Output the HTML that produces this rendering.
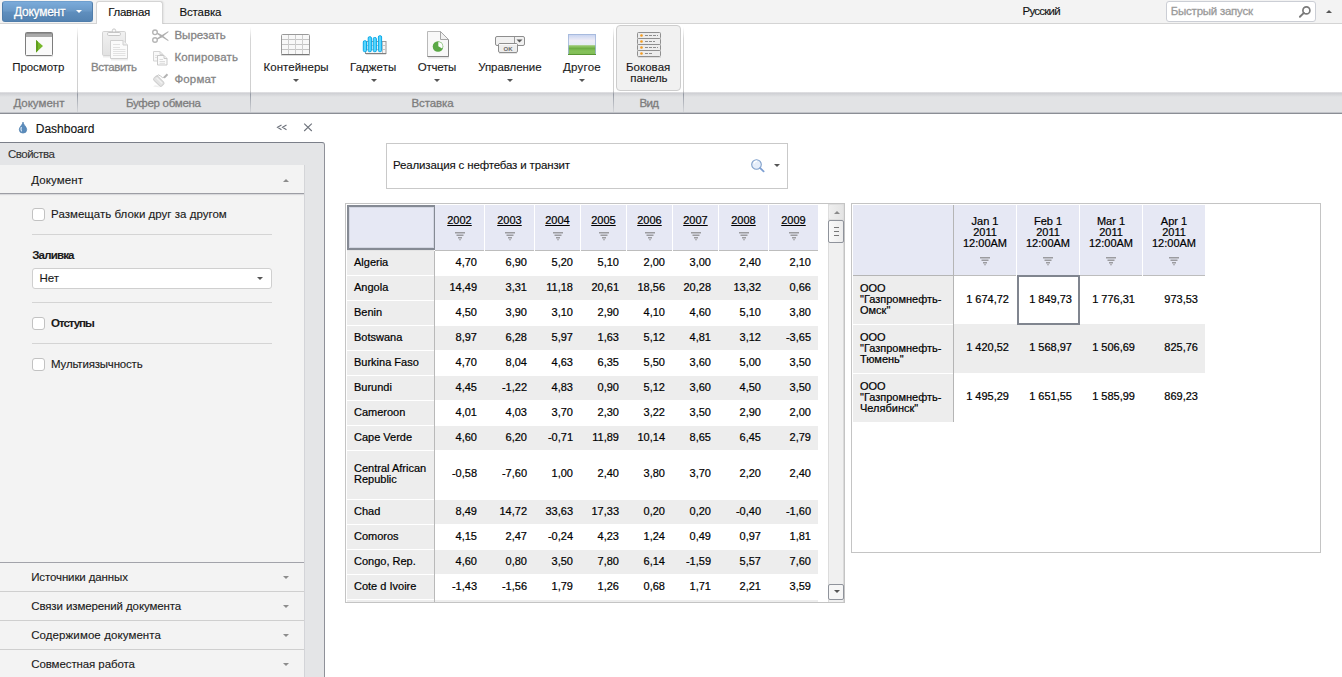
<!DOCTYPE html>
<html><head><meta charset="utf-8"><title>Dashboard</title>
<style>
*{box-sizing:border-box;margin:0;padding:0}
html,body{width:1342px;height:677px;overflow:hidden;background:#fff;font-family:"Liberation Sans",sans-serif;font-size:12px;color:#1a1a1a}
.abs{position:absolute;white-space:nowrap}
#tabbar{position:absolute;left:0;top:0;width:1342px;height:24px;background:#f3f3f3;border-bottom:1px solid #d4d4d4}
#docbtn{position:absolute;left:2px;top:1px;width:91px;height:21px;border-radius:3px;background:linear-gradient(#7babda,#6b9ac8 45%,#5f8ebd 55%,#5483b2);border:1px solid #4f7dab;border-top-color:#6f9fce}
#tab1{position:absolute;left:96px;top:1px;width:67px;height:23px;background:#fff;border:1px solid #d4d4d4;border-bottom:none;border-radius:3px 3px 0 0;font-size:13px;line-height:22px;text-align:center}
#tab2{position:absolute;left:179px;top:1px;font-size:13px;line-height:22px}
#quick{left:1166px;top:1px;width:150px;height:21px;border:1px solid #cbced5;border-radius:3px;background:#fff;color:#9a9a9a;font-size:12px;line-height:18px;padding-left:4px}
#ribbon{position:absolute;left:0;top:24px;width:1342px;height:69px;background:#fff}
#grpbar{position:absolute;left:0;top:92px;width:1342px;height:22px;background:linear-gradient(#e4e4e6,#d0d1d5 1.5px,#e2e3e5 5px);border-bottom:1px solid #8b8e95;box-shadow:inset 0 -1px 0 #c2c4c9}
.glabel{position:absolute;top:96px;width:120px;font-size:12px;color:#7b7b7b;text-align:center}
.vsep{position:absolute;top:27px;width:1px;height:85px;background:linear-gradient(#fff 0,#d6d6d6 12px,#cfcfcf 64px,#9499a3 67px,#a9adb5 72px,rgba(200,202,206,.5) 85px)}
.rbtn{position:absolute;top:60px;font-size:12.500px;text-align:center;line-height:14px;color:#1a1a1a;white-space:nowrap}
.dis{color:#858585}
.tri{position:absolute;width:0;height:0;border-left:3px solid transparent;border-right:3px solid transparent;border-top:3px solid #555}
#left{position:absolute;left:0;top:142px;width:325px;height:540px;background:#e4e5e7;border-top:1px solid #7b7f89;border-right:1px solid #8f9199;border-radius:0 3px 0 0}
#inner{position:absolute;left:0;top:165px;width:305px;height:520px;background:#f3f3f3;border-right:1px solid #d3d4d8}
.hr{position:absolute;left:32px;width:240px;height:1px;background:#d4d4d4}
.cb{position:absolute;left:32px;width:13px;height:13px;border:1px solid #c2c2c2;border-radius:3px;background:#fff}
.acc{position:absolute;left:0;width:304px;height:29px;border-top:1px solid #cfcfcf;font-size:12px;line-height:28px;padding-left:31px}
.hc{position:absolute;background:#e6e8f4;border-bottom:1px solid #bdbdbd;text-align:center;font-size:11px;color:#000}
.yr{margin-top:9px;line-height:13px;text-decoration:underline}
.mo{margin-top:11px;line-height:11px}
.mo+.filt{margin-top:8px}
.filt{display:block;margin:5px auto 0}
.rl{position:absolute;left:347px;width:87px;background:#ededed;font-size:11px;padding-left:7px;color:#000;white-space:nowrap}
.rl2{position:absolute;left:853px;width:100px;height:48px;background:#ededed;font-size:11px;line-height:11px;padding:7px 0 0 7px;color:#000}
.dc{position:absolute;font-size:11px;text-align:right;padding-right:7px;color:#000;white-space:nowrap}

.dc,.rl,.rl2,.hc{-webkit-text-stroke:0.2px #000}
#tab1{box-shadow:1px 0 2px rgba(0,0,0,.07)}

</style></head><body>
<div id="tabbar"></div>
<div id="docbtn"></div><div class="tri" style="left:76px;top:10px;border-top-color:#fff"></div>
<div class="abs" style="left:14.0px;top:6.3px;font-size:12px;line-height:1;letter-spacing:-0.25px;color:#fff;-webkit-text-stroke:0.3px #fff;text-shadow:0 1px 1px #3f6a96;">Документ</div>
<div id="tab1"></div>
<div class="abs" style="left:108.2px;top:7.2px;font-size:11.5px;line-height:1;letter-spacing:-0.28px;color:#111;-webkit-text-stroke:0.12px #111;">Главная</div>
<div class="abs" style="left:179.4px;top:7.2px;font-size:11.5px;line-height:1;letter-spacing:-0.11px;color:#111;-webkit-text-stroke:0.12px #111;">Вставка</div>
<div class="abs" style="left:1022.5px;top:6.2px;font-size:11.5px;line-height:1;letter-spacing:-0.75px;color:#111;-webkit-text-stroke:0.12px #111;">Русский</div>
<div class="abs" id="quick"></div>
<div class="abs" style="left:1170.8px;top:6.2px;font-size:11.5px;line-height:1;letter-spacing:-0.25px;color:#9a9a9a;-webkit-text-stroke:0.3px #9a9a9a;">Быстрый запуск</div>
<svg class="abs" style="left:1298px;top:5px" width="14" height="14" viewBox="0 0 14 14"><circle cx="8.400" cy="5.400" r="3.500" fill="none" stroke="#7a7a7a" stroke-width="1.700"/><path d="M5.900 7.900 L1.900 11.800" stroke="#7a7a7a" stroke-width="1.900" stroke-linecap="round"/></svg>
<div class="abs" style="left:1326px;top:10px;width:0;height:0;border-left:3px solid transparent;border-right:3px solid transparent;border-bottom:3px solid #555"></div>
<div id="ribbon"></div><div id="grpbar"></div>
<div class="vsep" style="left:77px"></div>
<div class="vsep" style="left:250px"></div>
<div class="vsep" style="left:613px"></div>
<div class="vsep" style="left:683px"></div>
<div class="abs" style="left:13.4px;top:97.7px;font-size:11.5px;line-height:1;letter-spacing:-0.00px;color:#7d7d7d;-webkit-text-stroke:0.3px #7d7d7d;">Документ</div>
<div class="abs" style="left:126.0px;top:97.7px;font-size:11.5px;line-height:1;letter-spacing:-0.29px;color:#7d7d7d;-webkit-text-stroke:0.3px #7d7d7d;">Буфер обмена</div>
<div class="abs" style="left:411.5px;top:97.7px;font-size:11.5px;line-height:1;letter-spacing:-0.12px;color:#7d7d7d;-webkit-text-stroke:0.3px #7d7d7d;">Вставка</div>
<div class="abs" style="left:639.5px;top:97.7px;font-size:11.5px;line-height:1;letter-spacing:-0.65px;color:#7d7d7d;-webkit-text-stroke:0.3px #7d7d7d;">Вид</div>
<svg class="abs" style="left:24px;top:31px" width="31" height="28" viewBox="0 0 31 28">
<rect x="2" y="24" width="27" height="2" fill="#e9e9e9"/>
<rect x="1.5" y="1.5" width="27" height="23" rx="1" fill="#fafafa" stroke="#7d7d7d"/>
<rect x="2" y="2" width="26" height="4" fill="#a9a9a9"/><rect x="2" y="2" width="26" height="1" fill="#8f8f8f"/>
<path d="M12 9 L19 15 L12 21.5 Z" fill="#76b82a"/><path d="M12 9 L14 10.7 L14 19.6 L12 21.5Z" fill="#5f9d1c"/></svg>
<div class="abs" style="left:12.2px;top:62.2px;font-size:11.5px;line-height:1;letter-spacing:-0.05px;color:#1a1a1a;-webkit-text-stroke:0.12px #1a1a1a;">Просмотр</div>
<svg class="abs" style="left:100px;top:27px" width="32" height="34" viewBox="0 0 32 34">
<defs><linearGradient id="cb1" x1="0" y1="0" x2="0" y2="1"><stop offset="0" stop-color="#f1f1f1"/><stop offset="1" stop-color="#e2e2e2"/></linearGradient></defs>
<path d="M3 29.500H26" stroke="#ececec" stroke-width="2"/>
<rect x="2.500" y="4.500" width="23" height="24" rx="1.200" fill="url(#cb1)" stroke="#d3d3d3"/>
<circle cx="14" cy="3.600" r="1.700" fill="#fafafa" stroke="#c8c8c8"/>
<rect x="7.500" y="5.500" width="13" height="3" rx="1.200" fill="#fafafa" stroke="#c6c6c6"/>
<path d="M11 32.500H28" stroke="#ededed" stroke-width="2"/>
<path d="M10.500 13.500 H23 L27.500 18 V31.500 H10.500 Z" fill="#fbfbfb" stroke="#d0d0d0"/><path d="M23 13.500 V18 H27.500" fill="#f0f0f0" stroke="#cfcfcf"/>
<path d="M13 17.500H20 M13 20.500H20 M13 22.500H25.500 M13 24.500H25.500 M13 26.500H25.500 M13 28.500H25.500" stroke="#e2e2e2"/></svg>
<div class="abs" style="left:90.9px;top:62.2px;font-size:11.5px;line-height:1;letter-spacing:-0.39px;color:#858585;-webkit-text-stroke:0.3px #858585;">Вставить</div>
<svg class="abs" style="left:151px;top:28px" width="19" height="16" viewBox="0 0 19 16">
<circle cx="4" cy="4.300" r="2.300" fill="none" stroke="#b5b5b5" stroke-width="1.400"/><circle cx="4" cy="12" r="2.300" fill="none" stroke="#b5b5b5" stroke-width="1.400"/>
<path d="M5.800 10.600 L9 8.200 L17.500 3 L17.300 4.300 L11 9.300 L6.700 11.500 Z" fill="#b0b0b0"/>
<path d="M5.800 5.700 L9 8.100 L17.500 13.200 L17.300 11.900 L11 7 L6.700 4.800 Z" fill="#b0b0b0"/></svg>
<svg class="abs" style="left:152px;top:50px" width="17" height="17" viewBox="0 0 17 17">
<path d="M1.500 1.500 H8 L11 4.500 V11 H1.500 Z" fill="#f9f9f9" stroke="#d4d4d4"/><path d="M8 1.500V4.500H11" fill="none" stroke="#d4d4d4"/><path d="M3 5.500H7M3 7.500H5.500" stroke="#e2e2e2"/>
<path d="M5.500 5.500 H12 L15 8.500 V15 H5.500 Z" fill="#fbfbfb" stroke="#c9c9c9"/><path d="M12 5.500V8.500H15" fill="#f0f0f0" stroke="#c9c9c9"/><path d="M7.500 9.500H11 M7.500 11.500H13 M7.500 13.300H13" stroke="#dcdcdc"/></svg>
<svg class="abs" style="left:151px;top:71px" width="19" height="18" viewBox="0 0 19 18">
<path d="M2 15.500 Q5 12.500 9 16.500 Z" fill="#efefef"/>
<g transform="rotate(45 8 10)"><rect x="2.500" y="7.500" width="11" height="5.500" rx="1.500" fill="#e3e3e3" stroke="#cfcfcf"/><path d="M4 9.500H12" stroke="#f4f4f4"/></g>
<path d="M5.500 5.500 Q7.500 2.500 9.500 5 T13.500 6.500" fill="none" stroke="#c6c6c6" stroke-width="1"/>
<path d="M13 6.800 L16.500 3.300" stroke="#b3b3b3" stroke-width="2"/></svg>
<div class="abs" style="left:174.4px;top:29.7px;font-size:11.5px;line-height:1;letter-spacing:0.04px;color:#858585;-webkit-text-stroke:0.3px #858585;">Вырезать</div>
<div class="abs" style="left:174.4px;top:52.0px;font-size:11.5px;line-height:1;letter-spacing:0.19px;color:#858585;-webkit-text-stroke:0.3px #858585;">Копировать</div>
<div class="abs" style="left:174.4px;top:73.7px;font-size:11.5px;line-height:1;letter-spacing:0.15px;color:#858585;-webkit-text-stroke:0.3px #858585;">Формат</div>
<svg class="abs" style="left:280px;top:33px" width="32" height="24" viewBox="0 0 32 24"><rect x="1" y="22" width="29" height="1" fill="#dedede"/><rect x="1.5" y="1.5" width="28" height="20" rx="1" fill="#f8f8f8" stroke="#999"/><path d="M1.500 21.500H29.500" stroke="#777"/><path d="M2 6.5H29" stroke="#c4c4c4"/><path d="M2 11.5H29" stroke="#c4c4c4"/><path d="M2 16.5H29" stroke="#c4c4c4"/><path d="M8.5 2V21" stroke="#cdcdcd"/><path d="M15.5 2V21" stroke="#cdcdcd"/><path d="M22.5 2V21" stroke="#cdcdcd"/></svg>
<svg class="abs" style="left:361px;top:34px" width="27" height="22" viewBox="0 0 27 22">
<path d="M5 20.500H25" stroke="#e2e2e2"/>
<rect x="4.500" y="7.500" width="20.500" height="12" fill="#f6f6f6" stroke="#9a9a9a"/><path d="M4.500 19.500H25" stroke="#7f7f7f"/><path d="M5 11.500H24.500 M5 15.500H24.500 M21.500 8V19" stroke="#c2c2c2"/>
<rect x="2.300" y="6.700" width="3.200" height="11" rx="1.300" fill="#58d6fd" stroke="#0ba8e8"/>
<rect x="7.200" y="2.700" width="3.200" height="15" rx="1.300" fill="#58d6fd" stroke="#0ba8e8"/>
<rect x="12.200" y="3.500" width="3.200" height="14.200" rx="1.300" fill="#58d6fd" stroke="#0ba8e8"/>
<rect x="17.400" y="1.700" width="3.200" height="16" rx="1.300" fill="#58d6fd" stroke="#0ba8e8"/></svg>
<svg class="abs" style="left:426px;top:30px" width="25" height="30" viewBox="0 0 25 30">
<path d="M2 27.500H23" stroke="#e6e6e6" stroke-width="2"/><path d="M1.500 1.500 H14.500 L22.500 9.500 V26.500 H1.500 Z" fill="#f8f8f8" stroke="#b9b9b9"/><path d="M22.500 9.500 V26.500 H1.500" fill="none" stroke="#858585"/><path d="M14.500 1.500 V9.500 H22.500 Z" fill="#f1f1f1" stroke="#a6a6a6" stroke-linejoin="round"/>
<circle cx="12" cy="16.500" r="5.300" fill="#5aa845"/><path d="M12.300 16.300 V11.900 A4.400 4.400 0 0 1 16.110 18.500 Z" fill="#fdfdfd"/></svg>
<svg class="abs" style="left:494px;top:35px" width="33" height="20" viewBox="0 0 33 20">
<rect x="1.500" y="1.500" width="29" height="9" rx="1.500" fill="#f1f1f1" stroke="#8e8e8e"/><path d="M20.500 2V10" stroke="#9a9a9a"/><path d="M22.500 4.500H28.500L25.500 7.600Z" fill="#5a5a5a"/>
<rect x="4.500" y="8.500" width="19" height="9" rx="1.500" fill="#ededed" stroke="#8e8e8e"/><path d="M5 9.500H23" stroke="#fafafa"/><text x="14" y="15.800" font-size="6" font-weight="bold" fill="#6a6a6a" text-anchor="middle" font-family="Liberation Sans">OK</text>
<path d="M5 18.500H23" stroke="#e5e5e5"/></svg>
<svg class="abs" style="left:567px;top:33px" width="30" height="23" viewBox="0 0 30 23">
<defs><linearGradient id="sky" x1="0" y1="0" x2="0" y2="1"><stop offset="0" stop-color="#c3d1f0"/><stop offset=".55" stop-color="#efedf6"/><stop offset="1" stop-color="#e3ecf4"/></linearGradient>
<linearGradient id="gr" x1="0" y1="0" x2="0" y2="1"><stop offset="0" stop-color="#a4d27a"/><stop offset=".35" stop-color="#6fae45"/><stop offset=".6" stop-color="#86c25b"/><stop offset="1" stop-color="#7fbd55"/></linearGradient></defs>
<rect x="1" y="1" width="28" height="12" fill="url(#sky)"/><rect x="1" y="12" width="28" height="10" fill="url(#gr)"/><path d="M1 12.500H29" stroke="#a9cf8a"/>
<rect x="1.500" y="1.500" width="27" height="20" fill="none" stroke="#9fb4da" stroke-opacity=".8"/><path d="M1 21.500H29" stroke="#5a9635"/></svg>
<div class="abs" style="left:616px;top:25px;width:65px;height:66px;background:#f1f1f1;border:1px solid #cdcdcd;border-radius:4px"></div>
<svg class="abs" style="left:636px;top:31px" width="27" height="28" viewBox="0 0 27 28"><rect x="1.500" y="1.5" width="23" height="6" rx="1" fill="#ececec" stroke="#8f8f8f"/><circle cx="5.500" cy="4.5" r="1.300" fill="#f39a1d"/><path d="M9 4.5H22" stroke="#8d8d8d" stroke-dasharray="3 1"/><rect x="1.500" y="7.5" width="23" height="6" rx="1" fill="#ececec" stroke="#8f8f8f"/><circle cx="5.500" cy="10.5" r="1.300" fill="#f39a1d"/><path d="M9 10.5H19" stroke="#8d8d8d" stroke-dasharray="3 1"/><rect x="1.500" y="13.5" width="23" height="6" rx="1" fill="#ececec" stroke="#8f8f8f"/><circle cx="5.500" cy="16.5" r="1.300" fill="#f39a1d"/><path d="M9 16.5H22" stroke="#8d8d8d" stroke-dasharray="3 1"/><rect x="1.500" y="19.5" width="23" height="6" rx="1" fill="#ececec" stroke="#8f8f8f"/><circle cx="5.500" cy="22.5" r="1.300" fill="#f39a1d"/><path d="M9 22.5H16" stroke="#8d8d8d" stroke-dasharray="3 1"/><path d="M2 26.500H25" stroke="#dcdcdc"/></svg>
<div class="abs" style="left:263.5px;top:62.2px;font-size:11.5px;line-height:1;letter-spacing:0.03px;color:#1a1a1a;-webkit-text-stroke:0.12px #1a1a1a;">Контейнеры</div>
<div class="tri" style="left:293px;top:79px"></div>
<div class="abs" style="left:350.0px;top:62.2px;font-size:11.5px;line-height:1;letter-spacing:0.06px;color:#1a1a1a;-webkit-text-stroke:0.12px #1a1a1a;">Гаджеты</div>
<div class="tri" style="left:371px;top:79px"></div>
<div class="abs" style="left:417.8px;top:62.2px;font-size:11.5px;line-height:1;letter-spacing:-0.25px;color:#1a1a1a;-webkit-text-stroke:0.12px #1a1a1a;">Отчеты</div>
<div class="tri" style="left:434px;top:79px"></div>
<div class="abs" style="left:478.2px;top:62.2px;font-size:11.5px;line-height:1;letter-spacing:-0.06px;color:#1a1a1a;-webkit-text-stroke:0.12px #1a1a1a;">Управление</div>
<div class="tri" style="left:507px;top:79px"></div>
<div class="abs" style="left:563.0px;top:62.2px;font-size:11.5px;line-height:1;letter-spacing:0.23px;color:#1a1a1a;-webkit-text-stroke:0.12px #1a1a1a;">Другое</div>
<div class="tri" style="left:579px;top:79px"></div>
<div class="abs" style="left:626.0px;top:62.2px;font-size:11.5px;line-height:1;letter-spacing:0.03px;color:#1a1a1a;-webkit-text-stroke:0.12px #1a1a1a;">Боковая</div>
<div class="abs" style="left:630.3px;top:72.5px;font-size:11.5px;line-height:1;letter-spacing:-0.10px;color:#1a1a1a;-webkit-text-stroke:0.12px #1a1a1a;">панель</div>
<svg class="abs" style="left:18px;top:121px" width="10" height="13" viewBox="0 0 10 13"><path d="M5 1 C5 3.500 1.300 5.800 1.300 8.600 A3.700 3.500 0 0 0 8.700 8.600 C8.700 5.800 5 3.500 5 1Z" fill="#5a8bbb" stroke="#4a7cae" stroke-width=".7"/><path d="M3.400 6 Q2.300 8.500 3.600 10.300" stroke="#d5e4f3" fill="none" stroke-width="1.300"/></svg>
<div class="abs" style="left:35.8px;top:122.7px;font-size:12px;line-height:1;letter-spacing:-0.01px;color:#111;-webkit-text-stroke:0.12px #111;">Dashboard</div>
<svg class="abs" style="left:276px;top:124px" width="12" height="7" viewBox="0 0 12 7"><path d="M5.500 1 L1.500 3.300 L5.500 5.800 M10.500 1 L6.500 3.300 L10.500 5.800" fill="none" stroke="#6d727b" stroke-width="1.100"/></svg>
<svg class="abs" style="left:303px;top:122px" width="10" height="10" viewBox="0 0 10 10"><path d="M1.200 1.700L8.800 9M8.800 1.700L1.200 9" stroke="#6d727b" stroke-width="1.100"/></svg>
<div id="left"></div><div id="inner"></div>
<div class="abs" style="left:8.0px;top:148.8px;font-size:11.5px;line-height:1;letter-spacing:-0.50px;color:#333;-webkit-text-stroke:0.12px #333;">Свойства</div>
<div class="abs" style="left:0;top:165px;width:304px;height:29px;border-bottom:1px solid #9c9da4;box-shadow:0 1px 1px #d9d9dc"></div>
<div class="abs" style="left:31.2px;top:174.6px;font-size:11.5px;line-height:1;letter-spacing:0.10px;color:#1a1a1a;-webkit-text-stroke:0.12px #1a1a1a;">Документ</div>
<div class="abs" style="left:283px;top:179px;width:0;height:0;border-left:3px solid transparent;border-right:3px solid transparent;border-bottom:3px solid #8c8c8c"></div>
<div class="cb" style="top:208px"></div>
<div class="abs" style="left:51.1px;top:209.2px;font-size:11.5px;line-height:1;letter-spacing:0.02px;color:#1a1a1a;-webkit-text-stroke:0.12px #1a1a1a;">Размещать блоки друг за другом</div>
<div class="hr" style="top:234px"></div>
<div class="abs" style="left:32.2px;top:249.6px;font-size:11.5px;line-height:1;letter-spacing:-0.82px;color:#1a1a1a;-webkit-text-stroke:0.1px #1a1a1a;font-weight:bold;">Заливка</div>
<div class="abs" style="left:32px;top:268px;width:240px;height:21px;border:1px solid #cfcfcf;border-radius:3px;background:#fff"></div>
<div class="abs" style="left:39.6px;top:272.9px;font-size:11.5px;line-height:1;letter-spacing:-0.09px;color:#1a1a1a;-webkit-text-stroke:0.12px #1a1a1a;">Нет</div>
<div class="tri" style="left:257px;top:277px"></div>
<div class="hr" style="top:302px"></div>
<div class="cb" style="top:317px"></div>
<div class="abs" style="left:51.1px;top:318.1px;font-size:11.5px;line-height:1;letter-spacing:-1.05px;color:#1a1a1a;-webkit-text-stroke:0.1px #1a1a1a;font-weight:bold;">Отступы</div>
<div class="hr" style="top:343px"></div>
<div class="cb" style="top:358px"></div>
<div class="abs" style="left:51.1px;top:358.9px;font-size:11.5px;line-height:1;letter-spacing:-0.19px;color:#1a1a1a;-webkit-text-stroke:0.12px #1a1a1a;">Мультиязычность</div>
<div class="acc" style="top:562px;border-top-color:#a2a3aa;"></div><div class="tri" style="left:283px;top:576px;border-top-color:#8c8c8c"></div>
<div class="abs" style="left:31.2px;top:571.9px;font-size:11.5px;line-height:1;letter-spacing:-0.12px;color:#1a1a1a;-webkit-text-stroke:0.12px #1a1a1a;">Источники данных</div>
<div class="acc" style="top:591px;"></div><div class="tri" style="left:283px;top:605px;border-top-color:#8c8c8c"></div>
<div class="abs" style="left:31.2px;top:600.9px;font-size:11.5px;line-height:1;letter-spacing:-0.11px;color:#1a1a1a;-webkit-text-stroke:0.12px #1a1a1a;">Связи измерений документа</div>
<div class="acc" style="top:620px;"></div><div class="tri" style="left:283px;top:634px;border-top-color:#8c8c8c"></div>
<div class="abs" style="left:31.2px;top:629.9px;font-size:11.5px;line-height:1;letter-spacing:0.09px;color:#1a1a1a;-webkit-text-stroke:0.12px #1a1a1a;">Содержимое документа</div>
<div class="acc" style="top:649px;"></div><div class="tri" style="left:283px;top:663px;border-top-color:#8c8c8c"></div>
<div class="abs" style="left:31.2px;top:658.9px;font-size:11.5px;line-height:1;letter-spacing:-0.09px;color:#1a1a1a;-webkit-text-stroke:0.12px #1a1a1a;">Совместная работа</div>
<div class="abs" style="left:386px;top:143px;width:402px;height:46px;border:1px solid #c9c9c9;background:#fff"></div>
<div class="abs" style="left:393.0px;top:160.0px;font-size:11.5px;line-height:1;letter-spacing:-0.15px;color:#111;-webkit-text-stroke:0.12px #111;">Реализация с нефтебаз и транзит</div>
<svg class="abs" style="left:750px;top:158px" width="16" height="16" viewBox="0 0 16 16"><circle cx="6.500" cy="6.500" r="4.800" fill="#e6eefa" stroke="#7f9fca" stroke-width="1.100"/><path d="M4 5.500A3 3 0 0 1 7 3.200" stroke="#fff" fill="none" stroke-width="1.200"/><path d="M10.200 10.200L13.600 13.400" stroke="#7d9fd2" stroke-width="1.800" stroke-linecap="round"/></svg>
<div class="tri" style="left:774px;top:164px"></div>
<div class="abs" style="left:345px;top:203px;width:500px;height:400px;border:1px solid #c4c4c4;background:#fff"></div>
<div class="abs" style="left:347px;top:205px;width:89px;height:45px;background:#e6e8f4;border:2px solid #858a94;box-shadow:inset 0 0 0 1px #d3d6e2"></div>
<div class="hc" style="left:435px;top:205px;width:49px;height:46px"><div class="yr">2002</div><svg class="filt" width="10" height="9" viewBox="0 0 10 9"><path d="M0 0.800H10M1.500 3.300H8.500M3 5.800H7" stroke="#9b9b9f" stroke-width="1.500"/><path d="M3.800 7.200H6.200L5 8.800Z" fill="#9b9b9f"/></svg></div>
<div class="hc" style="left:485px;top:205px;width:49px;height:46px"><div class="yr">2003</div><svg class="filt" width="10" height="9" viewBox="0 0 10 9"><path d="M0 0.800H10M1.500 3.300H8.500M3 5.800H7" stroke="#9b9b9f" stroke-width="1.500"/><path d="M3.800 7.200H6.200L5 8.800Z" fill="#9b9b9f"/></svg></div>
<div class="hc" style="left:535px;top:205px;width:45px;height:46px"><div class="yr">2004</div><svg class="filt" width="10" height="9" viewBox="0 0 10 9"><path d="M0 0.800H10M1.500 3.300H8.500M3 5.800H7" stroke="#9b9b9f" stroke-width="1.500"/><path d="M3.800 7.200H6.200L5 8.800Z" fill="#9b9b9f"/></svg></div>
<div class="hc" style="left:581px;top:205px;width:45px;height:46px"><div class="yr">2005</div><svg class="filt" width="10" height="9" viewBox="0 0 10 9"><path d="M0 0.800H10M1.500 3.300H8.500M3 5.800H7" stroke="#9b9b9f" stroke-width="1.500"/><path d="M3.800 7.200H6.200L5 8.800Z" fill="#9b9b9f"/></svg></div>
<div class="hc" style="left:627px;top:205px;width:45px;height:46px"><div class="yr">2006</div><svg class="filt" width="10" height="9" viewBox="0 0 10 9"><path d="M0 0.800H10M1.500 3.300H8.500M3 5.800H7" stroke="#9b9b9f" stroke-width="1.500"/><path d="M3.800 7.200H6.200L5 8.800Z" fill="#9b9b9f"/></svg></div>
<div class="hc" style="left:673px;top:205px;width:45px;height:46px"><div class="yr">2007</div><svg class="filt" width="10" height="9" viewBox="0 0 10 9"><path d="M0 0.800H10M1.500 3.300H8.500M3 5.800H7" stroke="#9b9b9f" stroke-width="1.500"/><path d="M3.800 7.200H6.200L5 8.800Z" fill="#9b9b9f"/></svg></div>
<div class="hc" style="left:719px;top:205px;width:49px;height:46px"><div class="yr">2008</div><svg class="filt" width="10" height="9" viewBox="0 0 10 9"><path d="M0 0.800H10M1.500 3.300H8.500M3 5.800H7" stroke="#9b9b9f" stroke-width="1.500"/><path d="M3.800 7.200H6.200L5 8.800Z" fill="#9b9b9f"/></svg></div>
<div class="hc" style="left:769px;top:205px;width:49px;height:46px"><div class="yr">2009</div><svg class="filt" width="10" height="9" viewBox="0 0 10 9"><path d="M0 0.800H10M1.500 3.300H8.500M3 5.800H7" stroke="#9b9b9f" stroke-width="1.500"/><path d="M3.800 7.200H6.200L5 8.800Z" fill="#9b9b9f"/></svg></div>
<div class="rl" style="top:251px;height:24px;line-height:22px">Algeria</div>
<div class="abs" style="left:347px;top:250px;width:87px;height:1px;background:#e4e4e4"></div>
<div class="dc" style="left:435px;top:251px;width:49px;height:24px;line-height:22px">4,70</div>
<div class="dc" style="left:485px;top:251px;width:49px;height:24px;line-height:22px">6,90</div>
<div class="dc" style="left:535px;top:251px;width:45px;height:24px;line-height:22px">5,20</div>
<div class="dc" style="left:581px;top:251px;width:45px;height:24px;line-height:22px">5,10</div>
<div class="dc" style="left:627px;top:251px;width:45px;height:24px;line-height:22px">2,00</div>
<div class="dc" style="left:673px;top:251px;width:45px;height:24px;line-height:22px">3,00</div>
<div class="dc" style="left:719px;top:251px;width:49px;height:24px;line-height:22px">2,40</div>
<div class="dc" style="left:769px;top:251px;width:49px;height:24px;line-height:22px">2,10</div>
<div class="rl" style="top:276px;height:24px;line-height:22px">Angola</div>
<div class="abs" style="left:435px;top:276px;width:383px;height:24px;background:#ededed"></div>
<div class="dc" style="left:435px;top:276px;width:49px;height:24px;line-height:22px">14,49</div>
<div class="dc" style="left:485px;top:276px;width:49px;height:24px;line-height:22px">3,31</div>
<div class="dc" style="left:535px;top:276px;width:45px;height:24px;line-height:22px">11,18</div>
<div class="dc" style="left:581px;top:276px;width:45px;height:24px;line-height:22px">20,61</div>
<div class="dc" style="left:627px;top:276px;width:45px;height:24px;line-height:22px">18,56</div>
<div class="dc" style="left:673px;top:276px;width:45px;height:24px;line-height:22px">20,28</div>
<div class="dc" style="left:719px;top:276px;width:49px;height:24px;line-height:22px">13,32</div>
<div class="dc" style="left:769px;top:276px;width:49px;height:24px;line-height:22px">0,66</div>
<div class="rl" style="top:301px;height:24px;line-height:22px">Benin</div>
<div class="dc" style="left:435px;top:301px;width:49px;height:24px;line-height:22px">4,50</div>
<div class="dc" style="left:485px;top:301px;width:49px;height:24px;line-height:22px">3,90</div>
<div class="dc" style="left:535px;top:301px;width:45px;height:24px;line-height:22px">3,10</div>
<div class="dc" style="left:581px;top:301px;width:45px;height:24px;line-height:22px">2,90</div>
<div class="dc" style="left:627px;top:301px;width:45px;height:24px;line-height:22px">4,10</div>
<div class="dc" style="left:673px;top:301px;width:45px;height:24px;line-height:22px">4,60</div>
<div class="dc" style="left:719px;top:301px;width:49px;height:24px;line-height:22px">5,10</div>
<div class="dc" style="left:769px;top:301px;width:49px;height:24px;line-height:22px">3,80</div>
<div class="rl" style="top:326px;height:24px;line-height:22px">Botswana</div>
<div class="abs" style="left:435px;top:326px;width:383px;height:24px;background:#ededed"></div>
<div class="dc" style="left:435px;top:326px;width:49px;height:24px;line-height:22px">8,97</div>
<div class="dc" style="left:485px;top:326px;width:49px;height:24px;line-height:22px">6,28</div>
<div class="dc" style="left:535px;top:326px;width:45px;height:24px;line-height:22px">5,97</div>
<div class="dc" style="left:581px;top:326px;width:45px;height:24px;line-height:22px">1,63</div>
<div class="dc" style="left:627px;top:326px;width:45px;height:24px;line-height:22px">5,12</div>
<div class="dc" style="left:673px;top:326px;width:45px;height:24px;line-height:22px">4,81</div>
<div class="dc" style="left:719px;top:326px;width:49px;height:24px;line-height:22px">3,12</div>
<div class="dc" style="left:769px;top:326px;width:49px;height:24px;line-height:22px">-3,65</div>
<div class="rl" style="top:351px;height:24px;line-height:22px">Burkina Faso</div>
<div class="dc" style="left:435px;top:351px;width:49px;height:24px;line-height:22px">4,70</div>
<div class="dc" style="left:485px;top:351px;width:49px;height:24px;line-height:22px">8,04</div>
<div class="dc" style="left:535px;top:351px;width:45px;height:24px;line-height:22px">4,63</div>
<div class="dc" style="left:581px;top:351px;width:45px;height:24px;line-height:22px">6,35</div>
<div class="dc" style="left:627px;top:351px;width:45px;height:24px;line-height:22px">5,50</div>
<div class="dc" style="left:673px;top:351px;width:45px;height:24px;line-height:22px">3,60</div>
<div class="dc" style="left:719px;top:351px;width:49px;height:24px;line-height:22px">5,00</div>
<div class="dc" style="left:769px;top:351px;width:49px;height:24px;line-height:22px">3,50</div>
<div class="rl" style="top:376px;height:24px;line-height:22px">Burundi</div>
<div class="abs" style="left:435px;top:376px;width:383px;height:24px;background:#ededed"></div>
<div class="dc" style="left:435px;top:376px;width:49px;height:24px;line-height:22px">4,45</div>
<div class="dc" style="left:485px;top:376px;width:49px;height:24px;line-height:22px">-1,22</div>
<div class="dc" style="left:535px;top:376px;width:45px;height:24px;line-height:22px">4,83</div>
<div class="dc" style="left:581px;top:376px;width:45px;height:24px;line-height:22px">0,90</div>
<div class="dc" style="left:627px;top:376px;width:45px;height:24px;line-height:22px">5,12</div>
<div class="dc" style="left:673px;top:376px;width:45px;height:24px;line-height:22px">3,60</div>
<div class="dc" style="left:719px;top:376px;width:49px;height:24px;line-height:22px">4,50</div>
<div class="dc" style="left:769px;top:376px;width:49px;height:24px;line-height:22px">3,50</div>
<div class="rl" style="top:401px;height:24px;line-height:22px">Cameroon</div>
<div class="dc" style="left:435px;top:401px;width:49px;height:24px;line-height:22px">4,01</div>
<div class="dc" style="left:485px;top:401px;width:49px;height:24px;line-height:22px">4,03</div>
<div class="dc" style="left:535px;top:401px;width:45px;height:24px;line-height:22px">3,70</div>
<div class="dc" style="left:581px;top:401px;width:45px;height:24px;line-height:22px">2,30</div>
<div class="dc" style="left:627px;top:401px;width:45px;height:24px;line-height:22px">3,22</div>
<div class="dc" style="left:673px;top:401px;width:45px;height:24px;line-height:22px">3,50</div>
<div class="dc" style="left:719px;top:401px;width:49px;height:24px;line-height:22px">2,90</div>
<div class="dc" style="left:769px;top:401px;width:49px;height:24px;line-height:22px">2,00</div>
<div class="rl" style="top:426px;height:24px;line-height:22px">Cape Verde</div>
<div class="abs" style="left:435px;top:426px;width:383px;height:24px;background:#ededed"></div>
<div class="dc" style="left:435px;top:426px;width:49px;height:24px;line-height:22px">4,60</div>
<div class="dc" style="left:485px;top:426px;width:49px;height:24px;line-height:22px">6,20</div>
<div class="dc" style="left:535px;top:426px;width:45px;height:24px;line-height:22px">-0,71</div>
<div class="dc" style="left:581px;top:426px;width:45px;height:24px;line-height:22px">11,89</div>
<div class="dc" style="left:627px;top:426px;width:45px;height:24px;line-height:22px">10,14</div>
<div class="dc" style="left:673px;top:426px;width:45px;height:24px;line-height:22px">8,65</div>
<div class="dc" style="left:719px;top:426px;width:49px;height:24px;line-height:22px">6,45</div>
<div class="dc" style="left:769px;top:426px;width:49px;height:24px;line-height:22px">2,79</div>
<div class="rl" style="top:451px;height:48px;line-height:11px;padding-top:12px">Central African<br>Republic</div>
<div class="dc" style="left:435px;top:451px;width:49px;height:48px;line-height:44px">-0,58</div>
<div class="dc" style="left:485px;top:451px;width:49px;height:48px;line-height:44px">-7,60</div>
<div class="dc" style="left:535px;top:451px;width:45px;height:48px;line-height:44px">1,00</div>
<div class="dc" style="left:581px;top:451px;width:45px;height:48px;line-height:44px">2,40</div>
<div class="dc" style="left:627px;top:451px;width:45px;height:48px;line-height:44px">3,80</div>
<div class="dc" style="left:673px;top:451px;width:45px;height:48px;line-height:44px">3,70</div>
<div class="dc" style="left:719px;top:451px;width:49px;height:48px;line-height:44px">2,20</div>
<div class="dc" style="left:769px;top:451px;width:49px;height:48px;line-height:44px">2,40</div>
<div class="rl" style="top:500px;height:24px;line-height:22px">Chad</div>
<div class="abs" style="left:435px;top:500px;width:383px;height:24px;background:#ededed"></div>
<div class="dc" style="left:435px;top:500px;width:49px;height:24px;line-height:22px">8,49</div>
<div class="dc" style="left:485px;top:500px;width:49px;height:24px;line-height:22px">14,72</div>
<div class="dc" style="left:535px;top:500px;width:45px;height:24px;line-height:22px">33,63</div>
<div class="dc" style="left:581px;top:500px;width:45px;height:24px;line-height:22px">17,33</div>
<div class="dc" style="left:627px;top:500px;width:45px;height:24px;line-height:22px">0,20</div>
<div class="dc" style="left:673px;top:500px;width:45px;height:24px;line-height:22px">0,20</div>
<div class="dc" style="left:719px;top:500px;width:49px;height:24px;line-height:22px">-0,40</div>
<div class="dc" style="left:769px;top:500px;width:49px;height:24px;line-height:22px">-1,60</div>
<div class="rl" style="top:525px;height:24px;line-height:22px">Comoros</div>
<div class="dc" style="left:435px;top:525px;width:49px;height:24px;line-height:22px">4,15</div>
<div class="dc" style="left:485px;top:525px;width:49px;height:24px;line-height:22px">2,47</div>
<div class="dc" style="left:535px;top:525px;width:45px;height:24px;line-height:22px">-0,24</div>
<div class="dc" style="left:581px;top:525px;width:45px;height:24px;line-height:22px">4,23</div>
<div class="dc" style="left:627px;top:525px;width:45px;height:24px;line-height:22px">1,24</div>
<div class="dc" style="left:673px;top:525px;width:45px;height:24px;line-height:22px">0,49</div>
<div class="dc" style="left:719px;top:525px;width:49px;height:24px;line-height:22px">0,97</div>
<div class="dc" style="left:769px;top:525px;width:49px;height:24px;line-height:22px">1,81</div>
<div class="rl" style="top:550px;height:24px;line-height:22px">Congo, Rep.</div>
<div class="abs" style="left:435px;top:550px;width:383px;height:24px;background:#ededed"></div>
<div class="dc" style="left:435px;top:550px;width:49px;height:24px;line-height:22px">4,60</div>
<div class="dc" style="left:485px;top:550px;width:49px;height:24px;line-height:22px">0,80</div>
<div class="dc" style="left:535px;top:550px;width:45px;height:24px;line-height:22px">3,50</div>
<div class="dc" style="left:581px;top:550px;width:45px;height:24px;line-height:22px">7,80</div>
<div class="dc" style="left:627px;top:550px;width:45px;height:24px;line-height:22px">6,14</div>
<div class="dc" style="left:673px;top:550px;width:45px;height:24px;line-height:22px">-1,59</div>
<div class="dc" style="left:719px;top:550px;width:49px;height:24px;line-height:22px">5,57</div>
<div class="dc" style="left:769px;top:550px;width:49px;height:24px;line-height:22px">7,60</div>
<div class="rl" style="top:575px;height:24px;line-height:22px">Cote d Ivoire</div>
<div class="dc" style="left:435px;top:575px;width:49px;height:24px;line-height:22px">-1,43</div>
<div class="dc" style="left:485px;top:575px;width:49px;height:24px;line-height:22px">-1,56</div>
<div class="dc" style="left:535px;top:575px;width:45px;height:24px;line-height:22px">1,79</div>
<div class="dc" style="left:581px;top:575px;width:45px;height:24px;line-height:22px">1,26</div>
<div class="dc" style="left:627px;top:575px;width:45px;height:24px;line-height:22px">0,68</div>
<div class="dc" style="left:673px;top:575px;width:45px;height:24px;line-height:22px">1,71</div>
<div class="dc" style="left:719px;top:575px;width:49px;height:24px;line-height:22px">2,21</div>
<div class="dc" style="left:769px;top:575px;width:49px;height:24px;line-height:22px">3,59</div>
<div class="rl" style="top:600px;height:2px;line-height:0px"></div>
<div class="abs" style="left:435px;top:600px;width:383px;height:2px;background:#ededed"></div>
<div class="abs" style="left:434px;top:251px;width:1px;height:351px;background:#b9b9b9"></div>
<div class="abs" style="left:828px;top:204px;width:16px;height:398px;background:#f0f0f0;border-left:1px solid #dcdcdc;border-right:1px solid #dadada"></div>
<div class="abs" style="left:828px;top:204px;width:16px;height:16px;background:linear-gradient(90deg,#efefef,#e4e4e4);border:1px solid #dedede;border-radius:2px"></div><div class="abs" style="left:834px;top:211px;width:0;height:0;border-left:3px solid transparent;border-right:3px solid transparent;border-bottom:3px solid #8a8a8a"></div>
<div class="abs" style="left:828px;top:220px;width:16px;height:23px;background:linear-gradient(90deg,#fafafa,#ececec);border:1px solid #8f939b;border-radius:2px"></div>
<div class="abs" style="left:834px;top:227px;width:5px;height:1px;background:#777"></div>
<div class="abs" style="left:834px;top:231px;width:5px;height:1px;background:#777"></div>
<div class="abs" style="left:834px;top:235px;width:5px;height:1px;background:#777"></div>
<div class="abs" style="left:828px;top:584px;width:16px;height:16px;background:#f6f6f6;border:1px solid #8f939b;border-radius:2px"></div><div class="tri" style="left:834px;top:590px"></div>
<div class="abs" style="left:851px;top:203px;width:470px;height:350px;border:1px solid #c4c4c4;background:#fff"></div>
<div class="abs" style="left:853px;top:205px;width:101px;height:71px;background:#e6e8f4;border-right:1px solid #b5b5b5;border-bottom:1px solid #b5b5b5"></div>
<div class="hc" style="left:954px;top:205px;width:62px;height:71px"><div class="mo">Jan 1<br>2011<br>12:00AM</div><svg class="filt" width="10" height="9" viewBox="0 0 10 9"><path d="M0 0.800H10M1.500 3.300H8.500M3 5.800H7" stroke="#9b9b9f" stroke-width="1.500"/><path d="M3.800 7.200H6.200L5 8.800Z" fill="#9b9b9f"/></svg></div>
<div class="hc" style="left:1017px;top:205px;width:62px;height:71px"><div class="mo">Feb 1<br>2011<br>12:00AM</div><svg class="filt" width="10" height="9" viewBox="0 0 10 9"><path d="M0 0.800H10M1.500 3.300H8.500M3 5.800H7" stroke="#9b9b9f" stroke-width="1.500"/><path d="M3.800 7.200H6.200L5 8.800Z" fill="#9b9b9f"/></svg></div>
<div class="hc" style="left:1080px;top:205px;width:62px;height:71px"><div class="mo">Mar 1<br>2011<br>12:00AM</div><svg class="filt" width="10" height="9" viewBox="0 0 10 9"><path d="M0 0.800H10M1.500 3.300H8.500M3 5.800H7" stroke="#9b9b9f" stroke-width="1.500"/><path d="M3.800 7.200H6.200L5 8.800Z" fill="#9b9b9f"/></svg></div>
<div class="hc" style="left:1143px;top:205px;width:62px;height:71px"><div class="mo">Apr 1<br>2011<br>12:00AM</div><svg class="filt" width="10" height="9" viewBox="0 0 10 9"><path d="M0 0.800H10M1.500 3.300H8.500M3 5.800H7" stroke="#9b9b9f" stroke-width="1.500"/><path d="M3.800 7.200H6.200L5 8.800Z" fill="#9b9b9f"/></svg></div>
<div class="rl2" style="top:276px">ООО<br>"Газпромнефть-<br>Омск"</div>
<div class="dc" style="left:954px;top:276px;width:62px;height:48px;line-height:46px;padding-right:7px">1&nbsp;674,72</div>
<div class="dc" style="left:1017px;top:276px;width:62px;height:48px;line-height:46px;padding-right:7px">1&nbsp;849,73</div>
<div class="dc" style="left:1080px;top:276px;width:62px;height:48px;line-height:46px;padding-right:7px">1&nbsp;776,31</div>
<div class="dc" style="left:1143px;top:276px;width:62px;height:48px;line-height:46px;padding-right:7px">973,53</div>
<div class="rl2" style="top:325px">ООО<br>"Газпромнефть-<br>Тюмень"</div>
<div class="abs" style="left:954px;top:324px;width:251px;height:49px;background:#ededed"></div>
<div class="dc" style="left:954px;top:324px;width:62px;height:48px;line-height:46px;padding-right:7px">1&nbsp;420,52</div>
<div class="dc" style="left:1017px;top:324px;width:62px;height:48px;line-height:46px;padding-right:7px">1&nbsp;568,97</div>
<div class="dc" style="left:1080px;top:324px;width:62px;height:48px;line-height:46px;padding-right:7px">1&nbsp;506,69</div>
<div class="dc" style="left:1143px;top:324px;width:62px;height:48px;line-height:46px;padding-right:7px">825,76</div>
<div class="rl2" style="top:374px">ООО<br>"Газпромнефть-<br>Челябинск"</div>
<div class="dc" style="left:954px;top:373px;width:62px;height:48px;line-height:46px;padding-right:7px">1&nbsp;495,29</div>
<div class="dc" style="left:1017px;top:373px;width:62px;height:48px;line-height:46px;padding-right:7px">1&nbsp;651,55</div>
<div class="dc" style="left:1080px;top:373px;width:62px;height:48px;line-height:46px;padding-right:7px">1&nbsp;585,99</div>
<div class="dc" style="left:1143px;top:373px;width:62px;height:48px;line-height:46px;padding-right:7px">869,23</div>
<div class="abs" style="left:953px;top:276px;width:1px;height:146px;background:#b5b5b5"></div>
<div class="abs" style="left:1017px;top:275px;width:63px;height:50px;border:2px solid #80858f"></div>
</body></html>
